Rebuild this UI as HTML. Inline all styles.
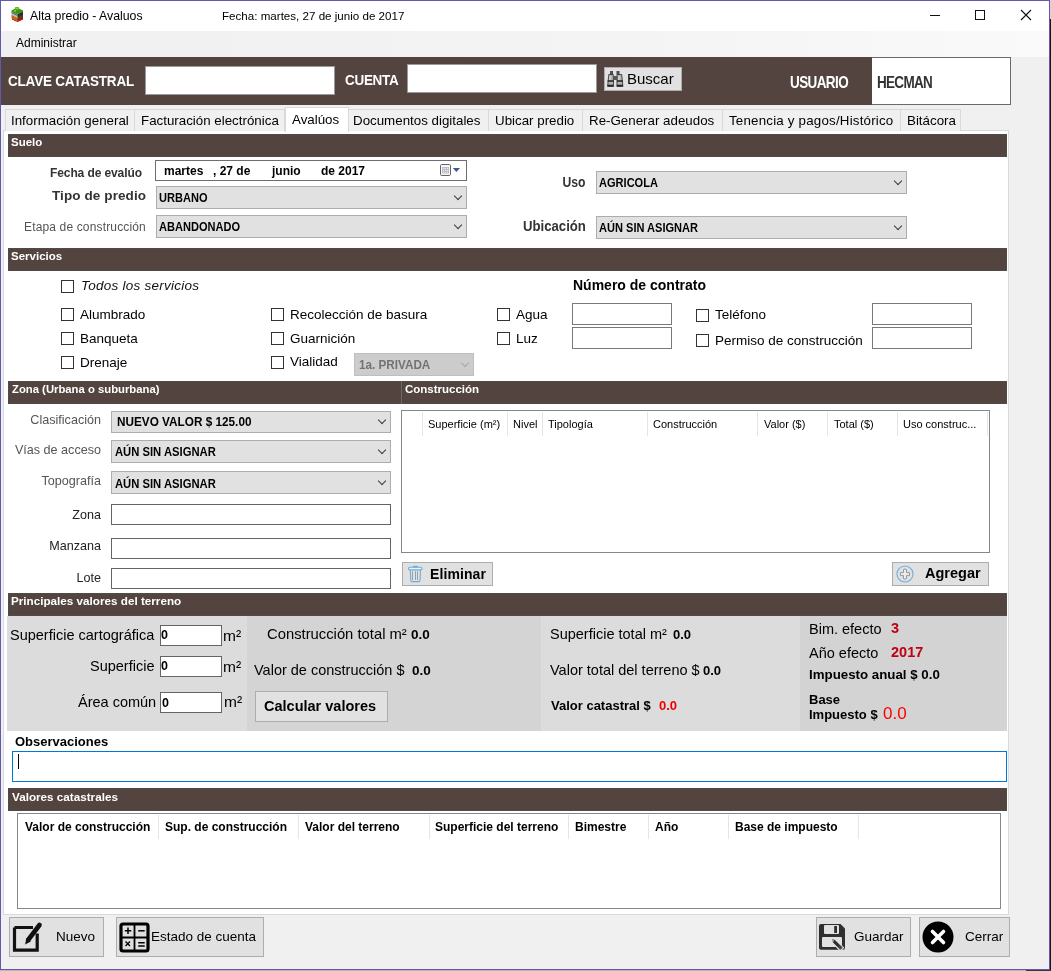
<!DOCTYPE html>
<html><head><meta charset="utf-8">
<style>
*{box-sizing:border-box;margin:0;padding:0}
html,body{width:1051px;height:971px;overflow:hidden;background:#1a1410}
body{position:relative;will-change:transform;font-family:"Liberation Sans",sans-serif;font-size:12px;color:#000}
div,span{position:absolute}
.t{white-space:nowrap;line-height:1}
.b{font-weight:bold}
.hdr{background:#54443f;border:1px solid #4e4b49}
.ht{color:#fff;font-weight:bold;font-size:11.5px;white-space:nowrap;line-height:1}
.inp{background:#fff;border:1px solid #7a7a7a}
.cmb{background:#e1e1e1;border:1px solid #adadad}
.cv{position:absolute;right:5px;top:50%;margin-top:-5px;width:6px;height:6px;border-right:1px solid #3a3a3a;border-bottom:1px solid #3a3a3a;transform:rotate(45deg)}
.ct{font-weight:bold;font-size:13px;transform:scaleX(0.85);transform-origin:0 0;white-space:nowrap;line-height:1;color:#000}
.chk{width:13px;height:13px;border:1px solid #333;background:#fff}
.btn{background:#e1e1e1;border:1px solid #adadad}
.tab{top:109px;height:22px;border:1px solid #d9d9d9;border-bottom:none;background:#f0f0f0}
.tt{font-size:13.33px;white-space:nowrap;line-height:1}
.gl{color:#555}
.sep{width:1px;background:#e5e5e5}
</style></head><body>
<!-- window frame -->
<div style="left:0;top:970px;width:1026px;height:1px;background:#b6b6ae"></div>
<div style="left:1026px;top:970px;width:25px;height:1px;background:#3a3a38"></div>
<div style="left:1050px;top:0;width:1px;height:19px;background:#d4d4d4"></div>
<div style="left:0;top:0;width:1050px;height:970px;background:#f0f0f0;border:1px solid #6158b2"></div>
<div style="left:1px;top:1px;width:1048px;height:30px;background:#fff"></div>
<div style="left:1px;top:31px;width:1048px;height:26px;background:linear-gradient(to right,#f0f0f0,#f4f4f4 60%,#fafafa)"></div>

<!-- title icon -->
<div style="left:11px;top:7px;width:13px;height:15px">
 <svg width="13" height="15" viewBox="0 0 13 15"><path d="M0.5 9 L0.5 4 L6.5 7 L6.5 12Z" fill="#b9bfc6"/><path d="M6.5 7 L12 4 L12 9.5 L6.5 12Z" fill="#2c302c"/><path d="M0.5 3.5 L4 1.5 L4.5 0 L7.5 0 L8 1.5 L12 3.5 L12 4.8 L6.5 7.5 L0.5 4.8Z" fill="#3e9418"/><path d="M4.5 0.5h3v2h-3z M3 3h2v1.5H3z" fill="#8ed232"/><path d="M0.5 5 L6.5 8 L6.5 9 L0.5 6Z" fill="#1f3a1a" opacity=".7"/><path d="M0.5 8 L6.5 11 L12 8.5 L12 12 L6.5 14 L0.5 11.5Z" fill="#c06a14"/><path d="M6.5 11 L12 8.5 L12 12 L6.5 14Z" fill="#7a2a10"/><path d="M1 11.5 L6.5 14 L12 11.5 L12 12.5 L9 14 L6.5 15 L4 14 L1 12.5Z" fill="#b81a08"/></svg>
</div>
<div class="t" style="left:30px;top:10px;font-size:12.3px">Alta predio - Avaluos</div>
<div class="t" style="left:222px;top:10px;font-size:11.6px">Fecha: martes, 27 de junio de 2017</div>
<!-- window controls -->
<div style="left:930px;top:15px;width:10px;height:1px;background:#111"></div>
<div style="left:975px;top:10px;width:10px;height:10px;border:1px solid #111"></div>
<div style="left:1019px;top:8px;width:14px;height:14px">
 <svg width="14" height="14" viewBox="0 0 14 14"><path d="M2 2 L12 12 M12 2 L2 12" stroke="#111" stroke-width="1.1"/></svg>
</div>
<div class="t" style="left:16px;top:37px;font-size:12px">Administrar</div>

<!-- top brown band -->
<div style="left:1px;top:57px;width:871px;height:48px;background:#54443f"></div>
<div style="left:872px;top:57px;width:139px;height:48px;background:#fff;border:1px solid #6a6a6a;border-left:none"></div>
<div class="t b" style="left:8px;top:74px;color:#fff;font-size:13.5px;letter-spacing:-0.2px;transform:scaleY(1.12);transform-origin:0 0">CLAVE CATASTRAL</div>
<div class="inp" style="left:145px;top:66px;width:190px;height:29px;border-color:#9a9a9a"></div>
<div class="t b" style="left:345px;top:73px;color:#fff;font-size:13.5px;letter-spacing:-0.3px;transform:scaleY(1.12);transform-origin:0 0">CUENTA</div>
<div class="inp" style="left:407px;top:64px;width:190px;height:29px;border-color:#9a9a9a"></div>
<div class="btn" style="left:604px;top:67px;width:78px;height:24px"></div>
<div style="left:607px;top:71px;width:17px;height:16px">
 <svg width="17" height="16" viewBox="0 0 17 16"><rect x="3" y="0" width="3" height="4" fill="#4a4a4a"/><rect x="9.5" y="0" width="3" height="4" fill="#4a4a4a"/><path d="M1.8 3.5 H6.3 L6.6 15.5 H0.6Z" fill="#b0b0b0" stroke="#3a3a3a" stroke-width=".9"/><path d="M10.2 3.5 H14.7 L15.9 15.5 H9.9Z" fill="#b0b0b0" stroke="#3a3a3a" stroke-width=".9"/><rect x="6.3" y="5" width="4" height="4" fill="#555"/><path d="M0.6 10h6M9.9 10h6" stroke="#222" stroke-width="1.3"/><path d="M0.6 14.5h6M9.9 14.5h6" stroke="#222" stroke-width="1.6"/><path d="M3 5v4M12 5v4" stroke="#eee" stroke-width=".9"/></svg>
</div>
<div class="t" style="left:627px;top:71px;font-size:15px">Buscar</div>
<div class="t b" style="left:790px;top:75px;color:#fff;font-size:13.5px;letter-spacing:-0.6px;transform:scaleY(1.22);transform-origin:0 0">USUARIO</div>
<div class="t b" style="left:877px;top:75px;color:#333;font-size:13.5px;letter-spacing:-0.7px;transform:scaleY(1.22);transform-origin:0 0">HECMAN</div>

<!-- tabs -->
<div style="left:3px;top:130px;width:1006px;height:785px;background:#fff;border:1px solid #d9d9d9"></div>
<div class="tab" style="left:5px;width:130px"><span class="tt" style="left:5px;top:4px">Información general</span></div>
<div class="tab" style="left:134px;width:151px"><span class="tt" style="left:6px;top:4px">Facturación electrónica</span></div>
<div class="tab" style="left:348px;width:141px"><span class="tt" style="left:4px;top:4px">Documentos digitales</span></div>
<div class="tab" style="left:488px;width:95px"><span class="tt" style="left:6px;top:4px">Ubicar predio</span></div>
<div class="tab" style="left:582px;width:141px"><span class="tt" style="left:6px;top:4px">Re-Generar adeudos</span></div>
<div class="tab" style="left:722px;width:179px"><span class="tt" style="left:6px;top:4px;letter-spacing:0.2px">Tenencia y pagos/Histórico</span></div>
<div class="tab" style="left:900px;width:61px"><span class="tt" style="left:6px;top:4px">Bitácora</span></div>
<div class="tab" style="left:285px;top:107px;height:25px;width:64px;background:#fff"><span class="tt" style="left:6px;top:5px">Avalúos</span></div>

<!-- SUELO -->
<div class="hdr" style="left:8px;top:134px;width:999px;height:23px"></div>
<div class="ht" style="left:11px;top:137px">Suelo</div>
<div class="t b" style="left:50px;top:167px;color:#333;letter-spacing:-0.1px">Fecha de evalúo</div>
<div class="inp" style="left:155px;top:160px;width:312px;height:21px;border-color:#6e6e6e"></div>
<div class="t b" style="left:164px;top:165px">martes</div>
<div class="t b" style="left:213px;top:165px">, 27 de</div>
<div class="t b" style="left:272px;top:165px">junio</div>
<div class="t b" style="left:321px;top:165px">de 2017</div>
<div style="left:440px;top:164px;width:22px;height:14px">
 <svg width="22" height="14" viewBox="0 0 22 14"><rect x="0.5" y="0.5" width="10" height="11" rx="1.2" fill="#f4f6fa" stroke="#6e625c"/><rect x="2" y="3" width="7" height="6.5" fill="#b9bfcb"/><path d="M3 4.5h1M5 4.5h1M7 4.5h1M3 6.5h1M5 6.5h1M7 6.5h1M3 8.3h1M5 8.3h1M7 8.3h1" stroke="#eef0f4" stroke-width=".9"/><path d="M12.8 4 L20 4 L16.4 8Z" fill="#3a5a90"/></svg>
</div>
<div class="t b" style="left:52px;top:189px;color:#333;font-size:13.5px;letter-spacing:0.1px">Tipo de predio</div>
<div class="cmb" style="left:156px;top:186px;width:311px;height:23px"><span class="ct" style="left:2px;top:4px">URBANO</span><span class="cv"></span></div>
<div class="t gl" style="left:24px;top:221px;letter-spacing:0.15px">Etapa de construcción</div>
<div class="cmb" style="left:156px;top:215px;width:311px;height:23px"><span class="ct" style="left:2px;top:4px">ABANDONADO</span><span class="cv"></span></div>
<div class="t b" style="left:559px;top:175px;color:#333;font-size:14px;transform:scaleX(0.87);transform-origin:100% 0;width:26px">Uso</div>
<div class="cmb" style="left:596px;top:171px;width:311px;height:23px"><span class="ct" style="left:2px;top:4px">AGRICOLA</span><span class="cv"></span></div>
<div class="t b" style="left:519px;top:219px;color:#333;font-size:14px;transform:scaleX(0.94);transform-origin:100% 0;width:67px">Ubicación</div>
<div class="cmb" style="left:596px;top:216px;width:311px;height:23px"><span class="ct" style="left:2px;top:4px">AÚN SIN ASIGNAR</span><span class="cv"></span></div>

<!-- SERVICIOS -->
<div class="hdr" style="left:8px;top:248px;width:999px;height:23px"></div>
<div class="ht" style="left:11px;top:251px">Servicios</div>
<div class="chk" style="left:61px;top:280px"></div>
<div class="t" style="left:81px;top:279px;font-size:13.5px;letter-spacing:0.25px;font-style:italic;color:#111">Todos los servicios</div>
<div class="chk" style="left:61px;top:308px"></div><div class="t" style="left:80px;top:308px;font-size:13.5px">Alumbrado</div>
<div class="chk" style="left:61px;top:332px"></div><div class="t" style="left:80px;top:332px;font-size:13.5px">Banqueta</div>
<div class="chk" style="left:61px;top:356px"></div><div class="t" style="left:80px;top:356px;font-size:13.5px">Drenaje</div>
<div class="chk" style="left:271px;top:308px"></div><div class="t" style="left:290px;top:308px;font-size:13.5px">Recolección de basura</div>
<div class="chk" style="left:271px;top:332px"></div><div class="t" style="left:290px;top:332px;font-size:13.5px">Guarnición</div>
<div class="chk" style="left:271px;top:356px"></div><div class="t" style="left:290px;top:355px;font-size:13.5px">Vialidad</div>
<div class="cmb" style="left:354px;top:353px;width:120px;height:23px;background:#cccccc;border-color:#bfbfbf"><span class="ct" style="left:3.5px;top:4px;color:#737373;transform:scaleX(0.9)">1a. PRIVADA</span><span class="cv" style="border-color:#a8a8a8"></span></div>
<div class="chk" style="left:497px;top:308px"></div><div class="t" style="left:516px;top:308px;font-size:13.5px">Agua</div>
<div class="chk" style="left:497px;top:332px"></div><div class="t" style="left:516px;top:332px;font-size:13.5px">Luz</div>
<div class="t b" style="left:573px;top:278px;font-size:14px">Número de contrato</div>
<div class="inp" style="left:572px;top:303px;width:100px;height:22px;border-color:#7a7a7a"></div>
<div class="inp" style="left:572px;top:327px;width:100px;height:22px;border-color:#7a7a7a"></div>
<div class="chk" style="left:696px;top:309px"></div><div class="t" style="left:715px;top:308px;font-size:13.5px">Teléfono</div>
<div class="chk" style="left:696px;top:334px"></div><div class="t" style="left:715px;top:334px;font-size:13.5px">Permiso de construcción</div>
<div class="inp" style="left:872px;top:303px;width:100px;height:22px;border-color:#7a7a7a"></div>
<div class="inp" style="left:872px;top:327px;width:100px;height:22px;border-color:#7a7a7a"></div>

<!-- ZONA / CONSTRUCCION -->
<div class="hdr" style="left:8px;top:381px;width:999px;height:23px"></div>
<div style="left:401px;top:381px;width:1px;height:23px;background:#6a6a6a"></div>
<div class="ht" style="left:12px;top:384px;font-size:11.3px">Zona (Urbana o suburbana)</div>
<div class="ht" style="left:405px;top:384px">Construcción</div>
<div class="t gl" style="left:0px;top:414px;width:101px;text-align:right;font-size:12.6px">Clasificación</div>
<div class="cmb" style="left:111px;top:411px;width:280px;height:22px"><span class="ct" style="left:5px;top:3px;transform:scaleX(0.905)">NUEVO VALOR $ 125.00</span><span class="cv"></span></div>
<div class="t gl" style="left:0px;top:444px;width:101px;text-align:right;font-size:12.6px">Vías de acceso</div>
<div class="cmb" style="left:111px;top:440px;width:280px;height:23px"><span class="ct" style="left:3px;top:4px;transform:scaleX(0.865)">AÚN SIN ASIGNAR</span><span class="cv"></span></div>
<div class="t gl" style="left:0px;top:475px;width:101px;text-align:right;font-size:12.6px">Topografía</div>
<div class="cmb" style="left:111px;top:471px;width:280px;height:23px"><span class="ct" style="left:3px;top:5px;transform:scaleX(0.865)">AÚN SIN ASIGNAR</span><span class="cv"></span></div>
<div class="t" style="left:0px;top:509px;width:101px;text-align:right;font-size:12.6px;color:#222">Zona</div>
<div class="inp" style="left:111px;top:504px;width:280px;height:21px;border-color:#646464"></div>
<div class="t" style="left:0px;top:540px;width:101px;text-align:right;font-size:12.6px;color:#222">Manzana</div>
<div class="inp" style="left:111px;top:538px;width:280px;height:21px;border-color:#646464"></div>
<div class="t" style="left:0px;top:572px;width:101px;text-align:right;font-size:12.6px;color:#222">Lote</div>
<div class="inp" style="left:111px;top:568px;width:280px;height:21px;border-color:#646464"></div>

<div style="left:401px;top:410px;width:589px;height:143px;background:#fff;border:1px solid #828790"></div>
<div class="sep" style="left:422px;top:412px;height:24px"></div>
<div class="sep" style="left:507px;top:412px;height:24px"></div>
<div class="sep" style="left:542px;top:412px;height:24px"></div>
<div class="sep" style="left:647px;top:412px;height:24px"></div>
<div class="sep" style="left:757px;top:412px;height:24px"></div>
<div class="sep" style="left:827px;top:412px;height:24px"></div>
<div class="sep" style="left:897px;top:412px;height:24px"></div>
<div class="sep" style="left:987px;top:412px;height:24px"></div>
<div class="t" style="left:428px;top:419px;font-size:11px">Superficie (m²)</div>
<div class="t" style="left:513px;top:419px;font-size:11px">Nivel</div>
<div class="t" style="left:548px;top:419px;font-size:11px">Tipología</div>
<div class="t" style="left:653px;top:419px;font-size:11px">Construcción</div>
<div class="t" style="left:764px;top:419px;font-size:11px">Valor ($)</div>
<div class="t" style="left:834px;top:419px;font-size:11px">Total ($)</div>
<div class="t" style="left:903px;top:419px;font-size:11px">Uso construc...</div>

<div class="btn" style="left:402px;top:562px;width:91px;height:24px"></div>
<div style="left:403px;top:562px;width:25px;height:25px">
 <svg width="25" height="25" viewBox="0 0 25 25"><rect x="5.5" y="5.3" width="13.5" height="2.6" rx="1.3" fill="#eef3f8" stroke="#6aaee0" stroke-width="1.1"/><rect x="10" y="3.7" width="5" height="1.8" rx="0.9" fill="#6aaee0"/><path d="M7.3 8.3 L7.8 18.6 Q7.9 19.6 8.9 19.6 H15.9 Q16.9 19.6 17 18.6 L17.5 8.3" fill="none" stroke="#6aaee0" stroke-width="1.1"/><path d="M9.5 9.2v8.8M12.5 9.2v8.8M14.5 9.2v8.8" stroke="#9aa0a8" stroke-width="1"/></svg>
</div>
<div class="t b" style="left:430px;top:567px;font-size:14px;letter-spacing:0.1px">Eliminar</div>
<div class="btn" style="left:892px;top:562px;width:97px;height:24px"></div>
<div style="left:893px;top:562px;width:25px;height:25px">
 <svg width="25" height="25" viewBox="0 0 25 25"><circle cx="12" cy="12" r="8" fill="none" stroke="#6aaee0" stroke-width="1.1"/><path d="M10.5 7.5 Q12 6.5 13.5 7.5 V10.6 H16.5 V13.6 H13.5 V16.7 Q12 17.7 10.5 16.7 V13.6 H7.5 V10.6 H10.5Z" fill="#ececec" stroke="#8a9098" stroke-width=".9"/></svg>
</div>
<div class="t b" style="left:925px;top:566px;font-size:14.5px">Agregar</div>

<!-- PRINCIPALES VALORES -->
<div class="hdr" style="left:8px;top:593px;width:999px;height:23px"></div>
<div class="ht" style="left:11px;top:595px;font-size:11.7px">Principales valores del terreno</div>
<div style="left:7px;top:616px;width:240px;height:115px;background:#dcdcdc"></div>
<div style="left:247px;top:616px;width:294px;height:115px;background:#d4d4d4"></div>
<div style="left:541px;top:616px;width:259px;height:115px;background:#dcdcdc"></div>
<div style="left:800px;top:616px;width:207px;height:115px;background:#d3d3d3"></div>
<div class="t" style="left:10px;top:628px;font-size:14.5px">Superficie cartográfica</div>
<div class="inp" style="left:160px;top:625px;width:62px;height:21px;border-color:#646464"><span class="t b" style="left:0px;top:3px;font-size:12.5px">0</span></div>
<div class="t" style="left:223px;top:628px;font-size:15.5px">m²</div>
<div class="t" style="left:90px;top:659px;font-size:14.5px">Superficie</div>
<div class="inp" style="left:160px;top:656px;width:62px;height:21px;border-color:#646464"><span class="t b" style="left:0px;top:3px;font-size:12.5px">0</span></div>
<div class="t" style="left:223px;top:659px;font-size:15.5px">m²</div>
<div class="t" style="left:78px;top:695px;font-size:14.5px">Área común</div>
<div class="inp" style="left:160px;top:692px;width:62px;height:21px;border-color:#646464"><span class="t b" style="left:1px;top:4px;font-size:12.5px">0</span></div>
<div class="t" style="left:224px;top:694px;font-size:15.5px">m²</div>

<div class="t" style="left:267px;top:627px;font-size:14.8px">Construcción total m²</div>
<div class="t b" style="left:411px;top:628px;font-size:13.5px">0.0</div>
<div class="t" style="left:254px;top:663px;font-size:14.5px">Valor de construcción $</div>
<div class="t b" style="left:412px;top:664px;font-size:13.5px">0.0</div>
<div class="btn" style="left:255px;top:691px;width:133px;height:31px"></div>
<div class="t b" style="left:264px;top:699px;font-size:14.5px">Calcular valores</div>

<div class="t" style="left:550px;top:627px;font-size:14.5px">Superficie total m²</div>
<div class="t b" style="left:673px;top:628px;font-size:13px">0.0</div>
<div class="t" style="left:550px;top:663px;font-size:14.5px">Valor total del terreno $</div>
<div class="t b" style="left:703px;top:664px;font-size:13px">0.0</div>
<div class="t b" style="left:551px;top:699px;font-size:13px">Valor catastral $</div>
<div class="t b" style="left:659px;top:699px;font-size:13px;color:#f00000">0.0</div>

<div class="t" style="left:809px;top:622px;font-size:14.5px">Bim. efecto</div>
<div class="t b" style="left:891px;top:621px;font-size:14.5px;color:#c00012">3</div>
<div class="t" style="left:809px;top:646px;font-size:14.5px">Año efecto</div>
<div class="t b" style="left:891px;top:645px;font-size:14.5px;color:#c00012">2017</div>
<div class="t b" style="left:809px;top:668px;font-size:13.3px">Impuesto anual $ 0.0</div>
<div class="t b" style="left:809px;top:693px;font-size:13px">Base</div>
<div class="t b" style="left:809px;top:708px;font-size:13px">Impuesto $</div>
<div class="t" style="left:883px;top:705px;font-size:17px;color:#ff0000">0.0</div>

<!-- OBSERVACIONES -->
<div class="t b" style="left:15px;top:735px;font-size:13px">Observaciones</div>
<div style="left:12px;top:751px;width:995px;height:31px;background:#fff;border:1px solid #0078d7"></div>
<div style="left:18px;top:754px;width:1px;height:15px;background:#000"></div>

<!-- VALORES CATASTRALES -->
<div class="hdr" style="left:8px;top:788px;width:999px;height:23px"></div>
<div class="ht" style="left:12px;top:791px;font-size:11.7px">Valores catastrales</div>
<div style="left:17px;top:813px;width:984px;height:96px;background:#fff;border:1px solid #828790"></div>
<div class="sep" style="left:158px;top:815px;height:24px"></div>
<div class="sep" style="left:298px;top:815px;height:24px"></div>
<div class="sep" style="left:429px;top:815px;height:24px"></div>
<div class="sep" style="left:568px;top:815px;height:24px"></div>
<div class="sep" style="left:648px;top:815px;height:24px"></div>
<div class="sep" style="left:728px;top:815px;height:24px"></div>
<div class="sep" style="left:858px;top:815px;height:24px"></div>
<div class="t b" style="left:25px;top:821px">Valor de construcción</div>
<div class="t b" style="left:165px;top:821px">Sup. de construcción</div>
<div class="t b" style="left:305px;top:821px">Valor del terreno</div>
<div class="t b" style="left:435px;top:821px">Superficie del terreno</div>
<div class="t b" style="left:575px;top:821px">Bimestre</div>
<div class="t b" style="left:655px;top:821px">Año</div>
<div class="t b" style="left:735px;top:821px">Base de impuesto</div>

<!-- BOTTOM BUTTONS -->
<div class="btn" style="left:9px;top:917px;width:95px;height:40px"></div>
<div style="left:12px;top:921px;width:32px;height:32px">
 <svg width="32" height="32" viewBox="0 0 32 32"><path d="M2.5 6.5 H21 M25.2 12.5 V29.2 H2.5 V6.5" fill="none" stroke="#111" stroke-width="3.2"/><path d="M16.5 18.5 L27.5 4" stroke="#111" stroke-width="4.6" stroke-linecap="round"/><path d="M14.2 17 L18.8 20.4 L13.2 23.5Z" fill="#111"/></svg>
</div>
<div class="t" style="left:56px;top:930px;font-size:13.5px">Nuevo</div>
<div class="btn" style="left:116px;top:917px;width:148px;height:40px"></div>
<div style="left:119px;top:922px;width:31px;height:31px">
 <svg width="31" height="31" viewBox="0 0 31 31"><rect x="2" y="2" width="27" height="27" rx="2" fill="#e0e0e0" stroke="#000" stroke-width="3.2"/><path d="M15.5 2v27M2 15.5h27" stroke="#000" stroke-width="1.8"/><path d="M9 5.5v6.5M5.8 8.8h6.5" stroke="#000" stroke-width="1.5"/><path d="M19.2 8.8h6.5" stroke="#000" stroke-width="1.5"/><path d="M6.5 19.5l4.5 4.5M11 19.5l-4.5 4.5" stroke="#000" stroke-width="1.3"/><path d="M19.2 20.8h6.5M19.2 24h6.5" stroke="#000" stroke-width="1.5"/></svg>
</div>
<div class="t" style="left:151px;top:930px;font-size:13.5px">Estado de cuenta</div>
<div class="btn" style="left:816px;top:917px;width:95px;height:40px"></div>
<div style="left:816px;top:918px;width:35px;height:38px">
 <svg width="35" height="38" viewBox="0 0 35 38"><path d="M3 8 Q3 6 5 6 H24.5 L29 10.5 V29.7 Q29 31.7 27 31.7 H5 Q3 31.7 3 29.7Z" fill="#2f2f2f"/><rect x="8" y="7" width="15" height="9" rx="1" fill="#e1e1e1"/><rect x="18.2" y="8" width="2.8" height="7" fill="#2f2f2f"/><rect x="6" y="19" width="20" height="10" rx="1" fill="#e1e1e1"/><path d="M15 20.2 L19.4 21.5 L27.5 29.6 L24.4 32.7 L16.3 24.6Z" fill="#2f2f2f" stroke="#e1e1e1" stroke-width="1.3" stroke-linejoin="round"/><path d="M16.3 22 L18 22.6 L17 24Z" fill="#f2f2f2"/><path d="M22.3 30.2 L25.4 27.1 M23.5 31.4 L26.6 28.3" stroke="#777" stroke-width=".6"/></svg>
</div>
<div class="t" style="left:854px;top:930px;font-size:13.5px">Guardar</div>
<div class="btn" style="left:919px;top:917px;width:91px;height:40px"></div>
<div style="left:922px;top:921px;width:32px;height:32px">
 <svg width="32" height="32" viewBox="0 0 32 32"><circle cx="16" cy="16" r="15.5" fill="#000"/><path d="M10.5 10.5 L21.5 21.5 M21.5 10.5 L10.5 21.5" stroke="#fff" stroke-width="3.6" stroke-linecap="round"/></svg>
</div>
<div class="t" style="left:965px;top:930px;font-size:13.5px">Cerrar</div>
</body></html>
